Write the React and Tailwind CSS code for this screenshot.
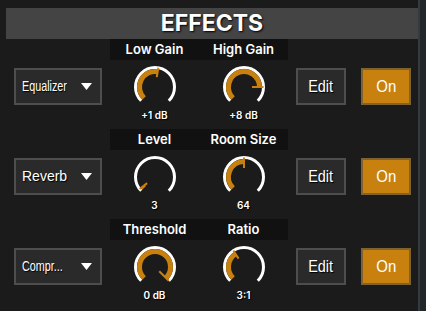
import React from "react";

const ORANGE = "#c8810f";

function polar(r, deg) {
  const a = ((deg - 90) * Math.PI) / 180;
  return [23 + r * Math.cos(a), 23 + r * Math.sin(a)];
}
function arc(r, a0, a1) {
  const [x0, y0] = polar(r, a0);
  const [x1, y1] = polar(r, a1);
  const large = a1 - a0 > 180 ? 1 : 0;
  return `M${x0.toFixed(2)} ${y0.toFixed(2)} A${r} ${r} 0 ${large} 1 ${x1.toFixed(2)} ${y1.toFixed(2)}`;
}

function Knob({ angle, inner = 9 }) {
  const [px0, py0] = polar(inner, angle);
  const [px1, py1] = polar(19.5, angle);
  return (
    <svg width="46" height="46" viewBox="0 0 46 46">
      <path d={arc(19.5, -135, 135)} fill="none" stroke="#ffffff" strokeWidth="3" />
      {angle > -133 && (
        <path d={arc(15.5, -135, angle)} fill="none" stroke={ORANGE} strokeWidth="5" />
      )}
      <line x1={px0} y1={py0} x2={px1} y2={py1} stroke={ORANGE} strokeWidth="2" />
    </svg>
  );
}

const sans = "font-['Liberation_Sans','Arial',sans-serif]";
const inter = "font-['Inter','Liberation_Sans',sans-serif]";

function Row({ name, squeeze, labels, values, angles, inners }) {
  return (
    <div className="flex items-start h-[90px]">
      <div className={`ml-[8px] mt-[29px] w-[88px] h-[37px] border-2 border-[#4e4e4e] bg-[#2a2a2a] flex items-center pl-[6px] pr-[8px] ${sans} text-[14px] text-white [text-shadow:1px_1px_1px_#000]`}>
        <span className="flex-1 min-w-0 whitespace-nowrap">
          <span className={`inline-block origin-left ${squeeze ? "scale-x-[0.77]" : ""}`}>{name}</span>
        </span>
        <svg width="11" height="7" viewBox="0 0 11 7" className="shrink-0">
          <polygon points="0,0 11,0 5.5,7" fill="#ffffff" />
        </svg>
      </div>
      <div className="ml-[8px] w-[178px] flex flex-col">
        <div className={`h-[21px] bg-[#111111] grid grid-cols-2 items-center ${inter} text-[13px] font-semibold text-white`}>
          {labels.map((l) => (
            <div key={l} className="text-center leading-none">{l}</div>
          ))}
        </div>
        <div className="grid grid-cols-2 mt-[4px]">
          {angles.map((a, i) => (
            <div key={i} className="flex flex-col items-center">
              <Knob angle={a} inner={inners[i]} />
              <div className={`h-[10px] leading-[10px] ${inter} text-[10px] font-semibold text-white [text-shadow:1px_1px_1px_#000]`}>
                {values[i]}
              </div>
            </div>
          ))}
        </div>
      </div>
      <div className={`ml-[8px] mt-[29px] w-[50px] h-[37px] border-2 border-[#4e4e4e] bg-[#2a2a2a] flex items-center justify-center ${sans} text-[17px] text-white [text-shadow:1px_1px_1px_#000]`}>
        <span className="inline-block scale-x-[0.85]">Edit</span>
      </div>
      <div className={`ml-[15px] mt-[29px] w-[50px] h-[37px] border-2 border-[#7d6331] bg-[#c8810f] flex items-center justify-center ${sans} text-[17px] text-white`}>
        <span className="inline-block scale-x-[0.88]">On</span>
      </div>
    </div>
  );
}

export default function App() {
  return (
    <div className="w-[426px] h-[311px] bg-[#1b1b1b] flex overflow-hidden">
      <div className="w-[418px] pl-[6px] pt-[8px]">
        <div className={`h-[31px] bg-[#444444] flex items-center justify-center ${inter} text-[23px] font-bold text-white leading-none [text-shadow:1px_1px_2px_#000]`}>
          EFFECTS
        </div>
        <Row
          name="Equalizer"
          squeeze
          labels={["Low Gain", "High Gain"]}
          values={["+1 dB", "+8 dB"]}
          angles={[10, 90]}
          inners={[10, 8]}
        />
        <Row
          name="Reverb"
          labels={["Level", "Room Size"]}
          values={["3", "64"]}
          angles={[-128, 0]}
          inners={[10, 9]}
        />
        <Row
          name="Compr..."
          squeeze
          labels={["Threshold", "Ratio"]}
          values={["0 dB", "3:1"]}
          angles={[135, -33]}
          inners={[6, 10]}
        />
      </div>
      <div className="w-[8px] border-l-2 border-[#343b40] bg-[#22272a]" />
    </div>
  );
}
